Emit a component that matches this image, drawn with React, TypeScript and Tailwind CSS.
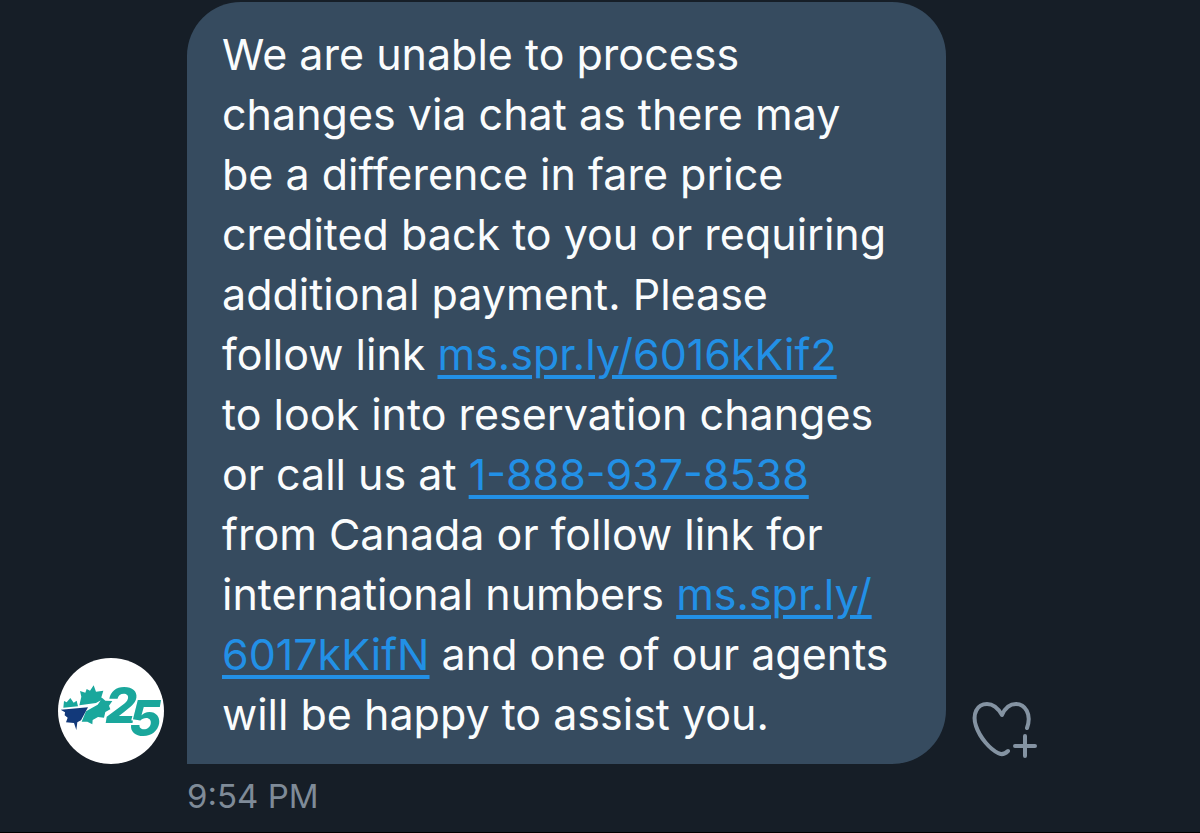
import type { ReactNode } from 'react';

function Avatar() {
  return (
    <a href="#profile" aria-label="WestJet profile" className="block size-[106px] shrink-0 overflow-hidden rounded-full bg-white">
      <svg viewBox="24 26 318 318" className="size-full">
        {/* Maple leaf */}
        <path
          fill="#1aa79c"
          d="M40 175 L42 155 L50 159 L61 146 L71 160 L80 154 L84 171 Z M88 168 L94 142 L90 125 L106 130 L110 119 L120 124 L131 108 L138 127 L160 124 L154 144 L158 150 L138 161 Z M95 217 L108 186 L143 166 L157 146 L166 154 L187 155 L177 169 L181 180 L166 188 L162 205 L144 203 L128 212 L127 225 L112 217 Z"
        />
        <path fill="#12397a" d="M32 181 L114 174 L93 213 L82 219 L79 242 L72 221 L48 219 L53 205 L44 198 L45 189 Z" />
        <text fill="#1aa79c" fontFamily="Inter, sans-serif" fontWeight="800" fontStyle="italic" fontSize="150">
          <tspan x="166" y="222">2</tspan>
          <tspan x="236" y="260" stroke="#fff" strokeWidth="8" paintOrder="stroke">5</tspan>
        </text>
      </svg>
    </a>
  );
}

function HeartPlus() {
  return (
    <svg viewBox="0 0 68 60" className="h-[60px] w-[68px]" fill="none" stroke="#8493a2" strokeWidth="4" strokeLinecap="round" strokeLinejoin="round">
      <path d="M57 28 C62 14 55 4 46 4 C39 4 35 8 32 15 C28 8 24 4 17 4 C7 4 2 14 6 26 C10 38 20 49 28 53 Q33 56 38 51" />
      <path d="M55 36 V56 M45 46 H65" />
    </svg>
  );
}

function MessageLink({ href, children }: { href: string; children: ReactNode }) {
  return (
    <a href={href} className="text-[#2290e6] underline decoration-4 underline-offset-[5px]">
      {children}
    </a>
  );
}

export default function App() {
  return (
    <main className="flex min-h-screen flex-col border-b border-black bg-[#161e27] pt-[2px] font-['Inter',sans-serif]">
      <div className="flex items-end pl-[58px]">
        <Avatar />
        <div className="ml-[23px] max-w-[759px] flex-1 rounded-[54px] rounded-bl-none bg-[#364b5f] px-[35px] pt-[22px] pb-[20px]">
          <p className="text-[43px] leading-[60px] whitespace-nowrap text-[#fafcfd]">
            We are unable to process<br />
            changes via chat as there may<br />
            be a difference in fare price<br />
            credited back to you or requiring<br />
            additional payment. Please<br />
            follow link <MessageLink href="https://ms.spr.ly/6016kKif2">ms.spr.ly/6016kKif2</MessageLink><br />
            to look into reservation changes<br />
            or call us at <MessageLink href="tel:1-888-937-8538">1-888-937-8538</MessageLink><br />
            from Canada or follow link for<br />
            international numbers{' '}
            <MessageLink href="https://ms.spr.ly/6017kKifN">ms.spr.ly/<br />6017kKifN</MessageLink> and one of our agents<br />
            will be happy to assist you.
          </p>
        </div>
        <button type="button" aria-label="Add reaction" className="mb-1 ml-6 shrink-0">
          <HeartPlus />
        </button>
      </div>
      <time dateTime="21:54" className="mt-2 ml-[187px] text-[33px] leading-[48px] text-[#7f8b98]">
        9:54 PM
      </time>
    </main>
  );
}
